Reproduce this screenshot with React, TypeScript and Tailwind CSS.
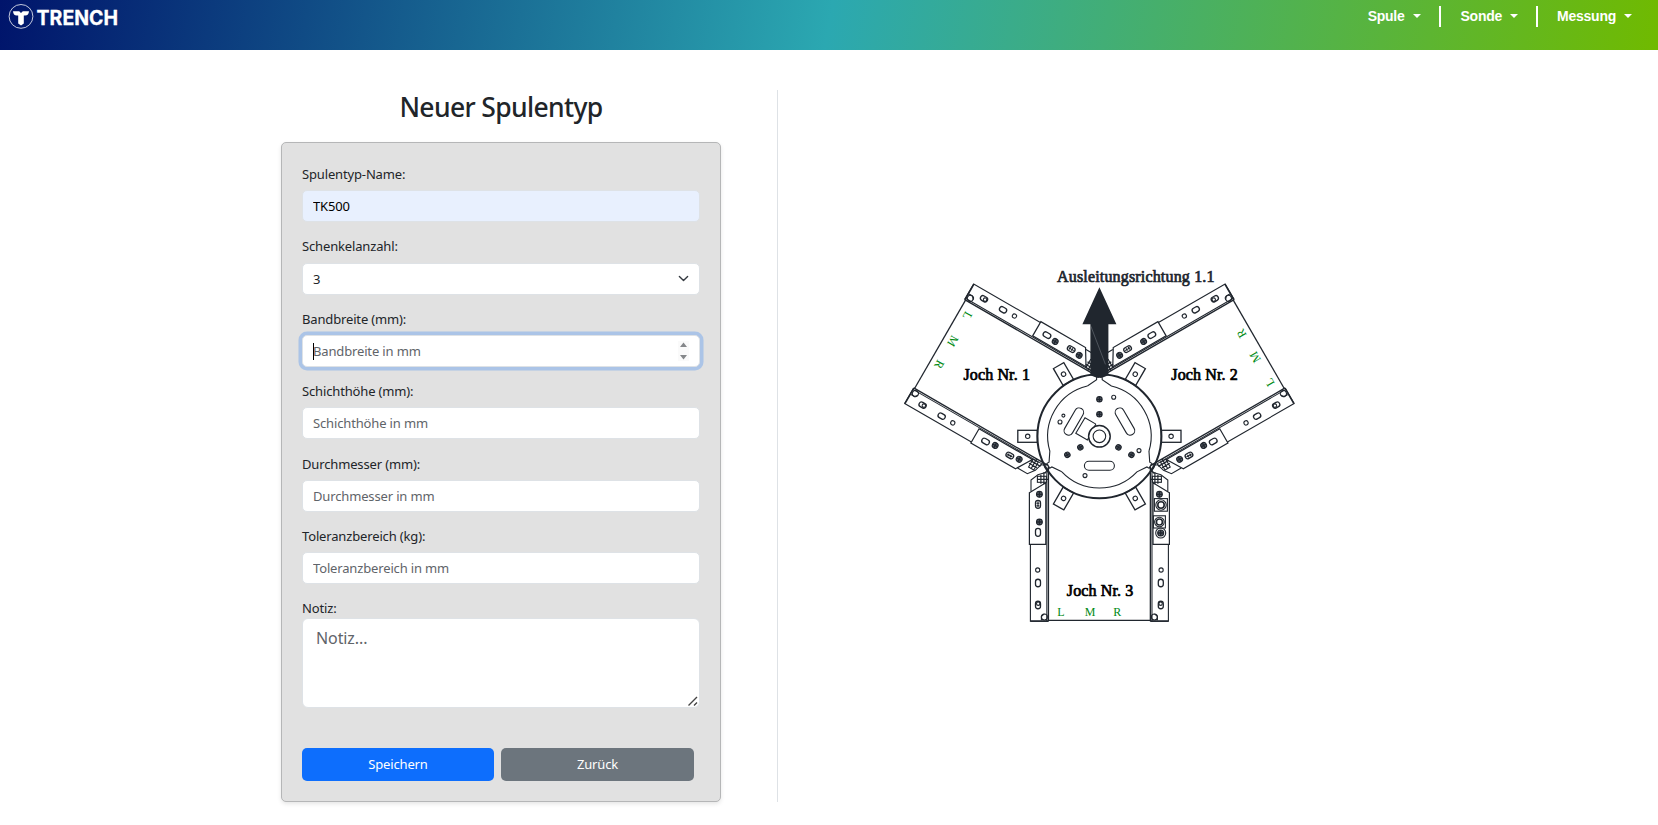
import React from 'react';

const INK = '#20262e';

function Logo() {
  return (
    <svg width="120" height="34" viewBox="0 0 120 34" className="block" role="img" aria-label="Trench">
      <circle cx="21" cy="16.4" r="11.9" fill="none" stroke="#fff" strokeOpacity="0.85" strokeWidth="0.9" />
      <path
        d="M13 11.2H19.2L21 12.9L22.8 11.2H29C28.8 14 27.6 15.4 25.2 15.4H23.8V23.4L21 25.6L18.2 23.4V15.4H16.8C14.4 15.4 13.2 14 13 11.2Z"
        fill="#fff"
      />
      <text
        x="36.6"
        y="25.2"
        fill="#fff"
        stroke="#fff"
        strokeWidth="0.3"
        fontFamily="Inter, 'Liberation Sans', sans-serif"
        fontWeight="700"
        fontSize="19.8"
        textLength="81.4"
        lengthAdjust="spacingAndGlyphs"
      >
        TRENCH
      </text>
    </svg>
  );
}

function NavItem({ label }: { label: string }) {
  return (
    <button className="flex h-[21px] items-center gap-[8px] text-[14px] leading-[21px] font-bold tracking-[-0.25px] text-white">
      {label}
      <svg width="8" height="4" viewBox="0 0 8 4" className="-mt-[2px]">
        <path d="M0 0H8L4 4Z" fill="#fff" />
      </svg>
    </button>
  );
}

function Bolt({ x, y, r = 2.9 }: { x: number; y: number; r?: number }) {
  return (
    <g>
      <circle cx={x} cy={y} r={r} fill="#59606a" stroke={INK} strokeWidth="1.1" />
      <path d={`M${x - r} ${y}H${x + r}M${x} ${y - r}V${y + r}`} stroke={INK} strokeWidth="1.3" />
    </g>
  );
}

function Slot({ x, y, h = 8 }: { x: number; y: number; h?: number }) {
  return <rect x={x - 2.5} y={y - h / 2} width="5" height={h} rx="2.5" strokeWidth="1.3" />;
}

function Rail({ nuts = false }: { nuts?: boolean }) {
  return (
    <g>
      <path d="M-69 108V185H-51" />
      <path d="M-69 184.8H-51" strokeWidth="1.6" />
      <path d="M-52.6 36V185" strokeWidth="1" />
      <path d="M-51 30V185" strokeWidth="1.4" />
      <path d="M-70 56.4L-53.6 46.4V108H-70Z" strokeWidth="1.2" />
      <path d="M-68.4 55V43.7L-61.5 38.5L-53 36" />
      <rect x="-62" y="40" width="9" height="6" />
      <path d="M-58.5 38.5V47.5M-55.5 36V48M-62 43H-51M-54.5 31L-50.5 37M-50.5 31L-54.5 37" strokeWidth="1.2" />
      <Bolt x={-60} y={58} />
      {nuts ? (
        <g>
          <rect x="-68" y="62.3" width="13" height="12.6" />
          <circle cx="-61.6" cy="68.7" r="5.2" />
          <circle cx="-61.6" cy="68.7" r="3.2" strokeWidth="1.6" />
          <rect x="-66" y="79.5" width="12" height="12.2" />
          <circle cx="-60" cy="85.7" r="4.8" />
          <circle cx="-60" cy="85.7" r="3" strokeWidth="1.6" />
          <circle cx="-61.3" cy="96.7" r="5" />
          <Bolt x={-61.3} y={96.7} r={3} />
        </g>
      ) : (
        <g>
          <Slot x={-61.4} y={68} />
          <path d="M-61.4 65V71M-63 67H-60M-63 69.5H-60" />
          <Bolt x={-60} y={85.7} />
          <Slot x={-61.4} y={96} />
        </g>
      )}
      <circle cx="-61.7" cy="133.7" r="2.1" />
      <Slot x={-61.4} y={146.7} h={7.5} />
      <Slot x={-61.4} y={168.7} h={7.5} />
      <circle cx="-61.2" cy="167.4" r="1.7" />
      <circle cx="-55" cy="180.7" r="3" />
      <path d="M-58 184V180L-55 177.5" />
    </g>
  );
}

const MARKS = [
  { letter: 'L', x: -38.4 },
  { letter: 'M', x: -9.2 },
  { letter: 'R', x: 17.9 },
];

function Arm({ angle }: { angle: number }) {
  return (
    <g transform={`rotate(${angle})`}>
      <Rail />
      <g transform="scale(-1 1)">
        <Rail nuts={angle === 0} />
      </g>
      <path d="M-51 184H51" strokeWidth="1.3" />
      <g fill="#008a14" stroke="none" fontSize="12" textAnchor="middle">
        {MARKS.map((m) => (
          <text key={m.letter} x={m.x} y={angle === 0 ? 180 : 178.5}>
            {m.letter}
          </text>
        ))}
      </g>
    </g>
  );
}

function Diagram() {
  return (
    <svg
      width="400"
      height="370"
      viewBox="-200.4 -176.3 400 370"
      className="block shrink-0"
      fontFamily="'Liberation Serif', 'Times New Roman', serif"
      fill="none"
      stroke={INK}
      strokeWidth="1.1"
    >
      <Arm angle={0} />
      <Arm angle={120} />
      <Arm angle={-120} />
      {[0, 60, 120, 180, 240, 300].map((a) => (
        <g key={a} transform={`rotate(${a})`}>
          <rect x="62" y="-6" width="19.6" height="12" strokeWidth="1.3" />
          <circle cx="71.7" cy="0" r="2.2" />
        </g>
      ))}
      <circle r="62" strokeWidth="2" />
      {[0, 120, 240].map((a) => (
        <g key={a} transform={`rotate(${a})`}>
          <path d="M-12 -50.3L-2.8 -56.5V-59H2.8V-56.5L12 -50.3A51.7 51.7 0 0 1 49.6 14.7" />
          <rect x="-15" y="25" width="30" height="9" rx="4.5" />
          <Bolt x={0} y={-37} r={2.7} />
          <Bolt x={0} y={-22} r={2.7} />
        </g>
      ))}
      <circle cx="14.3" cy="-39" r="2" />
      <circle cx="39.6" cy="14.3" r="2" />
      <circle cx="-14.4" cy="39.3" r="2" />
      <circle cx="-39.4" cy="-14.3" r="2" />
      <circle cx="-36" cy="-20.7" r="1.5" />
      <path d="M-3.5 -12.2L-14.4 -18.6L-23.6 -3L-12 3.7L-3.5 -12.2" fill="#fff" />
      <circle r="10.8" strokeWidth="1.5" fill="#fff" />
      <circle r="6.3" />
      <path d="M0 -149L17 -112H9V-61L4 -59H-4L-9 -61V-112H-17Z" fill={INK} stroke="none" />
      <path d="M-8.5 -110L6 -72" stroke="#7d838a" strokeWidth="0.5" />
      <g fontSize="16" strokeWidth="0.7">
        <text x="-42.4" y="-154.5" fill={INK} stroke={INK} textLength="157.5">
          Ausleitungsrichtung 1.1
        </text>
        <g stroke="#000" fill="#000">
          <text x="-136" y="-56" textLength="66.5">
            Joch Nr. 1
          </text>
          <text x="71.9" y="-56" textLength="66.5">
            Joch Nr. 2
          </text>
          <text x="-32.6" y="160" textLength="66.5">
            Joch Nr. 3
          </text>
        </g>
      </g>
    </svg>
  );
}

const CONTROL =
  'block h-[32px] w-full rounded-[5px] border border-[#dee2e6] px-[10px] text-[13px] tracking-[-0.15px] text-[#212529] outline-none placeholder:text-[#5f6469]';

function Field({ label, children }: { label: string; children: React.ReactNode }) {
  return (
    <div className="flex h-[72.4px] flex-col">
      <label className="mb-[6px] h-[20px] text-[13px] leading-[20px] tracking-[-0.15px]">{label}</label>
      <div className="relative">{children}</div>
    </div>
  );
}

export default function App() {
  return (
    <div className="min-h-[825px] bg-white font-['Noto_Sans',sans-serif] text-[#212529]">
      <header className="flex h-[50px] items-start justify-between bg-[linear-gradient(100deg,#00146b_0%,#2ba8b1_50%,#70ba00_100%)] pr-[26px] font-['Liberation_Sans',Arial,sans-serif]">
        <Logo />
        <nav className="flex items-center pt-[6px]">
          <NavItem label="Spule" />
          <span className="mr-5 ml-[18px] h-[21px] w-[2px] bg-white" />
          <NavItem label="Sonde" />
          <span className="mr-[19px] ml-[18px] h-[21px] w-[2px] bg-white" />
          <NavItem label="Messung" />
        </nav>
      </header>

      <main className="flex pt-10">
        <section className="flex h-[712px] w-[778px] flex-col border-r border-[#dee2e6] pl-[281px]">
          <h1 className="h-[52px] w-[440px] text-center text-[26.5px] leading-[35px] font-medium tracking-[-0.65px]">
            Neuer Spulentyp
          </h1>
          <form className="flex h-[660px] w-[440px] flex-col rounded-[5px] border border-[#b5b6b7] bg-[#e1e1e1] px-5 pt-[21px] shadow-[0_2px_4px_rgba(0,0,0,0.1)]">
            <Field label="Spulentyp-Name:">
              <input className={`${CONTROL} bg-[#e8f0fe] text-black`} defaultValue="TK500" />
            </Field>
            <Field label="Schenkelanzahl:">
              <div className={`${CONTROL} mt-[0.6px] flex items-center justify-between bg-white`}>
                <span className="pt-px">3</span>
                <svg
                  width="11"
                  height="11"
                  viewBox="0 0 16 16"
                  fill="none"
                  stroke="#343a40"
                  strokeWidth="2"
                  strokeLinecap="round"
                  strokeLinejoin="round"
                >
                  <path d="m2 5 6 6 6-6" />
                </svg>
              </div>
            </Field>
            <Field label="Bandbreite (mm):">
              <input
                className={`${CONTROL} border-[#86b7fe] bg-white shadow-[0_0_0_3.5px_rgba(13,110,253,0.25)]`}
                placeholder="Bandbreite in mm"
              />
              <span className="absolute top-[8px] left-[11px] h-[17px] w-px bg-black" />
              <svg className="absolute top-[6px] right-[11px] bg-[#fafafa]" width="11" height="20" viewBox="0 0 11 20">
                <path d="M5.5 1.5L9 6H2ZM5.5 18.5L9 14H2Z" fill="#85878a" />
              </svg>
            </Field>
            <Field label="Schichthöhe (mm):">
              <input className={`${CONTROL} bg-white`} placeholder="Schichthöhe in mm" />
            </Field>
            <Field label="Durchmesser (mm):">
              <input className={`${CONTROL} bg-white`} placeholder="Durchmesser in mm" />
            </Field>
            <Field label="Toleranzbereich (kg):">
              <input className={`${CONTROL} bg-white`} placeholder="Toleranzbereich in mm" />
            </Field>
            <label className="-mt-[0.8px] h-[20px] text-[13px] leading-[20px] tracking-[-0.15px]">Notiz:</label>
            <div className="relative">
              <textarea
                className="block h-[90.5px] w-full resize-none rounded-[6px] border border-[#dee2e6] bg-white px-[13px] py-[7px] text-[16px] leading-[24px] tracking-[-0.1px] outline-none placeholder:text-[#5f6469]"
                placeholder="Notiz..."
              />
              <svg
                className="absolute right-[2px] bottom-[2px]"
                width="10"
                height="10"
                viewBox="0 0 10 10"
                stroke="#444"
                strokeWidth="1.4"
              >
                <path d="M0.5 9.5L9 1M6 9.5L9 6.5" />
              </svg>
            </div>
            <div className="mt-[39.9px] flex gap-[7px]">
              <button
                type="button"
                className="h-[33px] w-[192px] rounded-[5px] bg-[#0d6efd] text-[13px] tracking-[-0.15px] text-white"
              >
                Speichern
              </button>
              <button
                type="button"
                className="h-[33px] w-[193px] rounded-[5px] bg-[#6c757d] text-[13px] tracking-[-0.15px] text-white"
              >
                Zurück
              </button>
            </div>
          </form>
        </section>
        <section className="flex flex-1 items-start pt-[170px] pl-[121px]">
          <Diagram />
        </section>
      </main>
    </div>
  );
}
